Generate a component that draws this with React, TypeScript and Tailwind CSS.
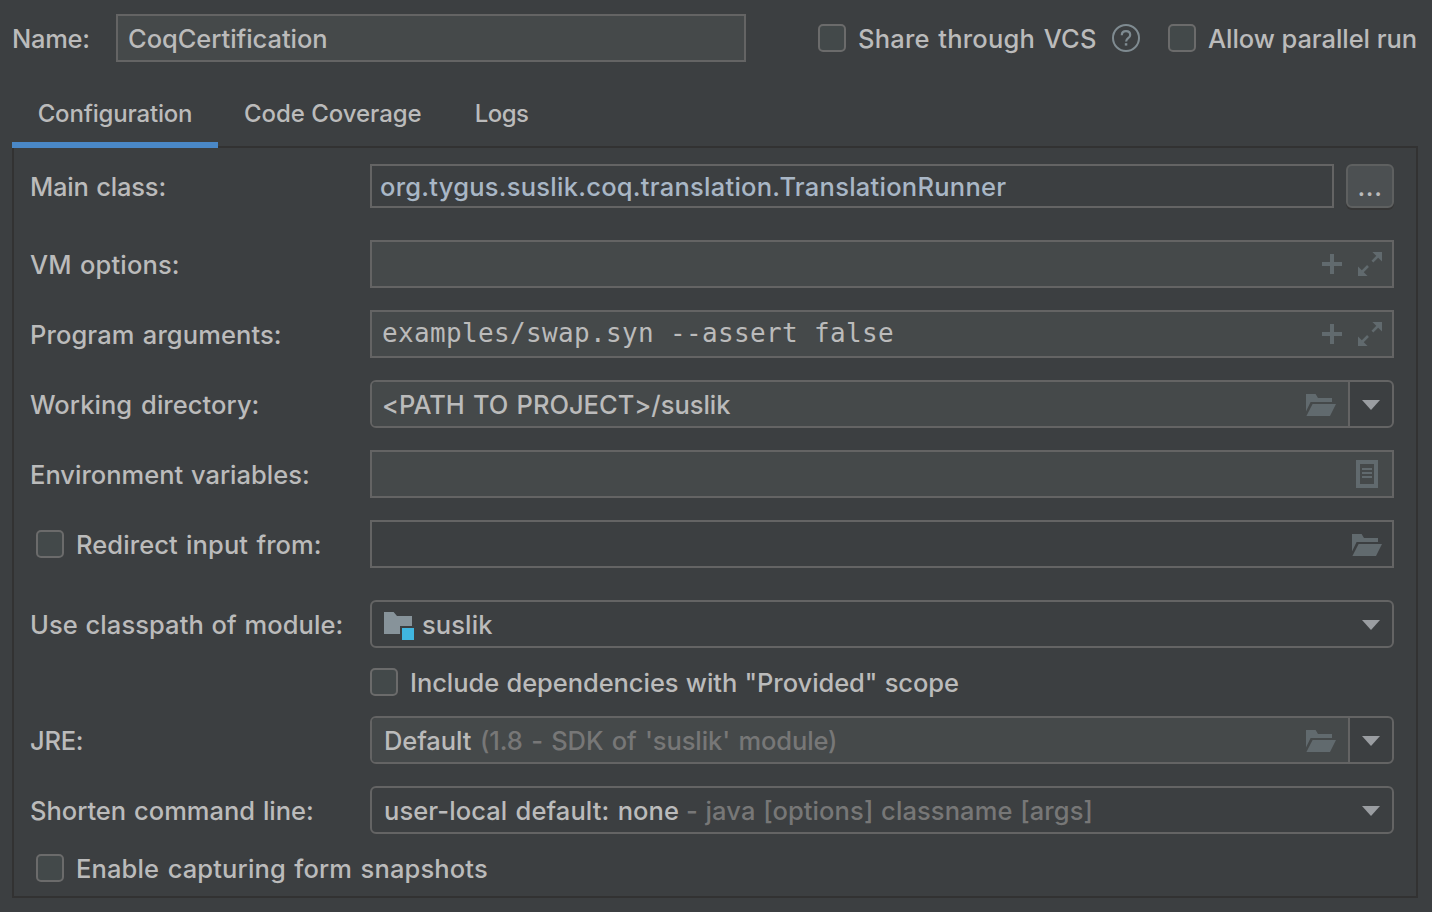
import type { ReactNode } from "react";
import { clsx } from "clsx";

function Text({ children, className }: { children: ReactNode; className?: string }) {
  return <span className={clsx("whitespace-pre leading-8", className)}>{children}</span>;
}

function Checkbox() {
  return <span className="size-7 shrink-0 rounded-[5px] border-2 border-[#6b6b6b] bg-[#43494a]" />;
}

function Row({ label, className, children }: { label: ReactNode; className?: string; children: ReactNode }) {
  return (
    <div className={clsx("flex items-center", className ?? "mt-[22px] h-12")}>
      <div className="flex w-[340px] shrink-0 items-center">{label}</div>
      {children}
    </div>
  );
}

function Field({ className, children }: { className?: string; children?: ReactNode }) {
  return (
    <div className={clsx("flex h-full min-w-0 flex-1 items-center border-2 border-[#646464]", className)}>
      {children}
    </div>
  );
}

function PlusIcon() {
  return (
    <svg className="size-5" viewBox="0 0 20 20" fill="#616a6e">
      <path d="M8 0h4v8h8v4h-8v8H8v-8H0V8h8z" />
    </svg>
  );
}

function ExpandIcon() {
  return (
    <svg className="size-6" viewBox="0 0 24 24" fill="#616a6e">
      <path d="M14.4 0H24v9.6z" />
      <path d="M0 14.4V24h9.6z" />
      <path d="M14.4 9.6 20 4M4 20l6-6" stroke="#616a6e" strokeWidth="2.6" />
    </svg>
  );
}

function FolderIcon({ className }: { className?: string }) {
  return (
    <svg className={clsx("h-[22px] w-[30px]", className)} viewBox="0 0 30 22" fill="#616a6e">
      <path d="M0 0h9.6L12 4h14v4H4.6L0 17.6z" />
      <path d="M6.6 10H30l-6 12H.4z" />
    </svg>
  );
}

function ListIcon() {
  return (
    <svg className="h-7 w-[22px]" viewBox="0 0 22 28" fill="#616a6e">
      <path fillRule="evenodd" d="M0 0h22v28H0zM4 4v20h14V4z" />
      <path d="M6 8h10v2H6zM6 12h10v2H6zM6 16h10v2H6z" />
    </svg>
  );
}

function ModuleIcon() {
  return (
    <svg className="h-7 w-[30px]" viewBox="0 0 30 28">
      <path d="M0 0h9.6L13 4h15v10H16v8H0z" fill="#87939a" />
      <path d="M18 16h12v12H18z" fill="#40b6e0" />
    </svg>
  );
}

function Arrow() {
  return (
    <svg className="mt-0.5 h-2.5 w-[18px]" viewBox="0 0 18 10" fill="#9a9da1">
      <path d="M0 0h18L9 10z" />
    </svg>
  );
}

function ArgumentIcons() {
  return (
    <div className="ml-auto flex items-center gap-4 pr-2.5">
      <PlusIcon />
      <ExpandIcon />
    </div>
  );
}

function PathCombo({ children }: { children: ReactNode }) {
  return (
    <Field className="overflow-hidden rounded-md">
      <div className="flex h-full flex-1 items-center bg-[#45494a] pl-3 pr-3">
        {children}
        <FolderIcon className="ml-auto mt-0.5" />
      </div>
      <div className="flex h-full w-11 items-center border-l-2 border-[#646464] pl-3">
        <Arrow />
      </div>
    </Field>
  );
}

export default function App() {
  return (
    <div className="flex h-[912px] w-[1432px] flex-col overflow-hidden bg-[#3c3f41] pb-[14px] pl-3 pr-[14px] pt-[14px] font-[Inter,sans-serif] text-[25.5px] font-[450] text-[#bbbbbb]">
      <header className="flex h-12 items-center">
        <div className="flex w-[104px] shrink-0 items-center pt-px">
          <Text className="tracking-[-0.3px]">Name:</Text>
        </div>
        <div className="flex h-12 w-[630px] items-center border-2 border-[#646464] bg-[#45494a] pl-2.5 pt-px">
          <Text className="tracking-[-0.05px]">CoqCertification</Text>
        </div>
        <div className="ml-[72px] flex items-center">
          <Checkbox />
          <Text className="ml-3 mt-px w-[242px] tracking-[0.2px] [word-spacing:1.7px]">Share through VCS</Text>
          <span className="ml-3 flex size-7 items-center justify-center">
            <svg className="size-7" viewBox="0 0 28 28" fill="none" stroke="#7f8b91" strokeWidth="2">
              <circle cx="14" cy="14" r="13" />
              <path d="M9.8 11.2C9.8 8.7 11.5 7.2 14 7.2s4.2 1.4 4.2 3.7c0 3.3-4.1 3.3-4.1 6.6" strokeWidth="2.2" />
              <path d="M12.8 19.2h2.5v2.4h-2.5z" fill="#7f8b91" stroke="none" />
            </svg>
          </span>
          <span className="ml-7 flex">
            <Checkbox />
          </span>
          <Text className="ml-3 mt-px tracking-[-0.06px]">Allow parallel run</Text>
        </div>
      </header>

      <nav className="mt-5 flex h-[66px] shrink-0 text-[24px]">
        <div className="relative z-10 flex w-[206px] justify-center border-b-[6px] border-[#4a88c7] pt-4">
          <Text className="tracking-[-0.18px]">Configuration</Text>
        </div>
        <div className="flex pl-[26px] pt-4">
          <Text className="tracking-[-0.05px]">Code Coverage</Text>
        </div>
        <div className="flex pl-[53px] pt-4">
          <Text className="tracking-[-0.5px]">Logs</Text>
        </div>
      </nav>

      <main className="flex flex-1 flex-col border-2 border-t-0 border-[#323232] pl-4 pr-[22px] shadow-[0_-2px_0_#323232]">
        <Row className="mt-4 h-11" label={<Text className="mt-px tracking-[-0.2px] [word-spacing:1px]">Main class:</Text>}>
          <Field className="pl-2">
            <Text className="mt-px tracking-[0.25px] text-[#a9b7c6]">org.tygus.suslik.coq.translation.TranslationRunner</Text>
          </Field>
          <button className="ml-3 flex h-11 w-12 items-center justify-center rounded-md border-2 border-[#5e6060] bg-[#4c5052] shadow-[0_2px_0_#363636]">
            <Text className="mt-px tracking-[0.6px]">...</Text>
          </button>
        </Row>
        <Row className="mt-8 h-12" label={<Text className="mt-px tracking-[0.14px] [word-spacing:1.5px]">VM options:</Text>}>
          <Field className="bg-[#45494a]">
            <ArgumentIcons />
          </Field>
        </Row>
        <Row label={<Text className="mt-px tracking-[0.09px] [word-spacing:1.5px]">Program arguments:</Text>}>
          <Field className="bg-[#45494a] pl-2.5">
            <Text className="-mt-[3px] font-['DejaVu_Sans_Mono',monospace] text-[26px] tracking-[0.347px]">examples/swap.syn --assert false</Text>
            <ArgumentIcons />
          </Field>
        </Row>
        <Row label={<Text className="mt-px tracking-[0.06px] [word-spacing:2px]">Working directory:</Text>}>
          <PathCombo>
            <Text className="-ml-0.5 mt-px tracking-[-0.02px] [word-spacing:1.4px]">{"<PATH TO PROJECT>/suslik"}</Text>
          </PathCombo>
        </Row>
        <Row label={<Text className="mt-px [word-spacing:1px]">Environment variables:</Text>}>
          <Field className="bg-[#45494a] pr-3.5">
            <span className="ml-auto">
              <ListIcon />
            </span>
          </Field>
        </Row>
        <Row
          label={
            <div className="flex items-center gap-3 pl-1.5">
              <Checkbox />
              <Text className="mt-px tracking-[0.09px] [word-spacing:1.4px]">Redirect input from:</Text>
            </div>
          }
        >
          <Field className="pr-2.5">
            <FolderIcon className="ml-auto mt-0.5" />
          </Field>
        </Row>
        <Row className="mt-8 h-12" label={<Text className="mt-px tracking-[0.07px] [word-spacing:0.9px]">Use classpath of module:</Text>}>
          <Field className="rounded-md pl-3 pr-3">
            <span className="mt-1">
              <ModuleIcon />
            </span>
            <Text className="ml-2 mt-px tracking-[0.1px]">suslik</Text>
            <span className="ml-auto">
              <Arrow />
            </span>
          </Field>
        </Row>
        <div className="mt-5 flex h-7 items-center gap-3 pl-[340px]">
          <Checkbox />
          <Text className="mt-px tracking-[-0.06px] [word-spacing:0.6px]">Include dependencies with "Provided" scope</Text>
        </div>
        <Row className="mt-5 h-12" label={<Text className="mt-px tracking-[-0.25px]">JRE:</Text>}>
          <PathCombo>
            <Text className="mt-px w-24 tracking-[-0.1px]">Default</Text>
            <Text className="mt-px tracking-[-0.1px] text-[#777777] [word-spacing:1.7px]">(1.8 - SDK of 'suslik' module)</Text>
          </PathCombo>
        </Row>
        <Row label={<Text className="mt-px tracking-[-0.02px] [word-spacing:1.2px]">Shorten command line:</Text>}>
          <Field className="rounded-md pl-3 pr-3">
            <Text className="mt-px w-[302px] tracking-[0.09px] [word-spacing:1.4px]">user-local default: none</Text>
            <Text className="mt-px tracking-[0.1px] text-[#777777] [word-spacing:0.8px]">- java [options] classname [args]</Text>
            <span className="ml-auto">
              <Arrow />
            </span>
          </Field>
        </Row>
        <div className="mt-5 flex h-7 items-center gap-3 pl-1.5">
          <Checkbox />
          <Text className="mt-px tracking-[0.14px] [word-spacing:1.5px]">Enable capturing form snapshots</Text>
        </div>
      </main>
    </div>
  );
}
